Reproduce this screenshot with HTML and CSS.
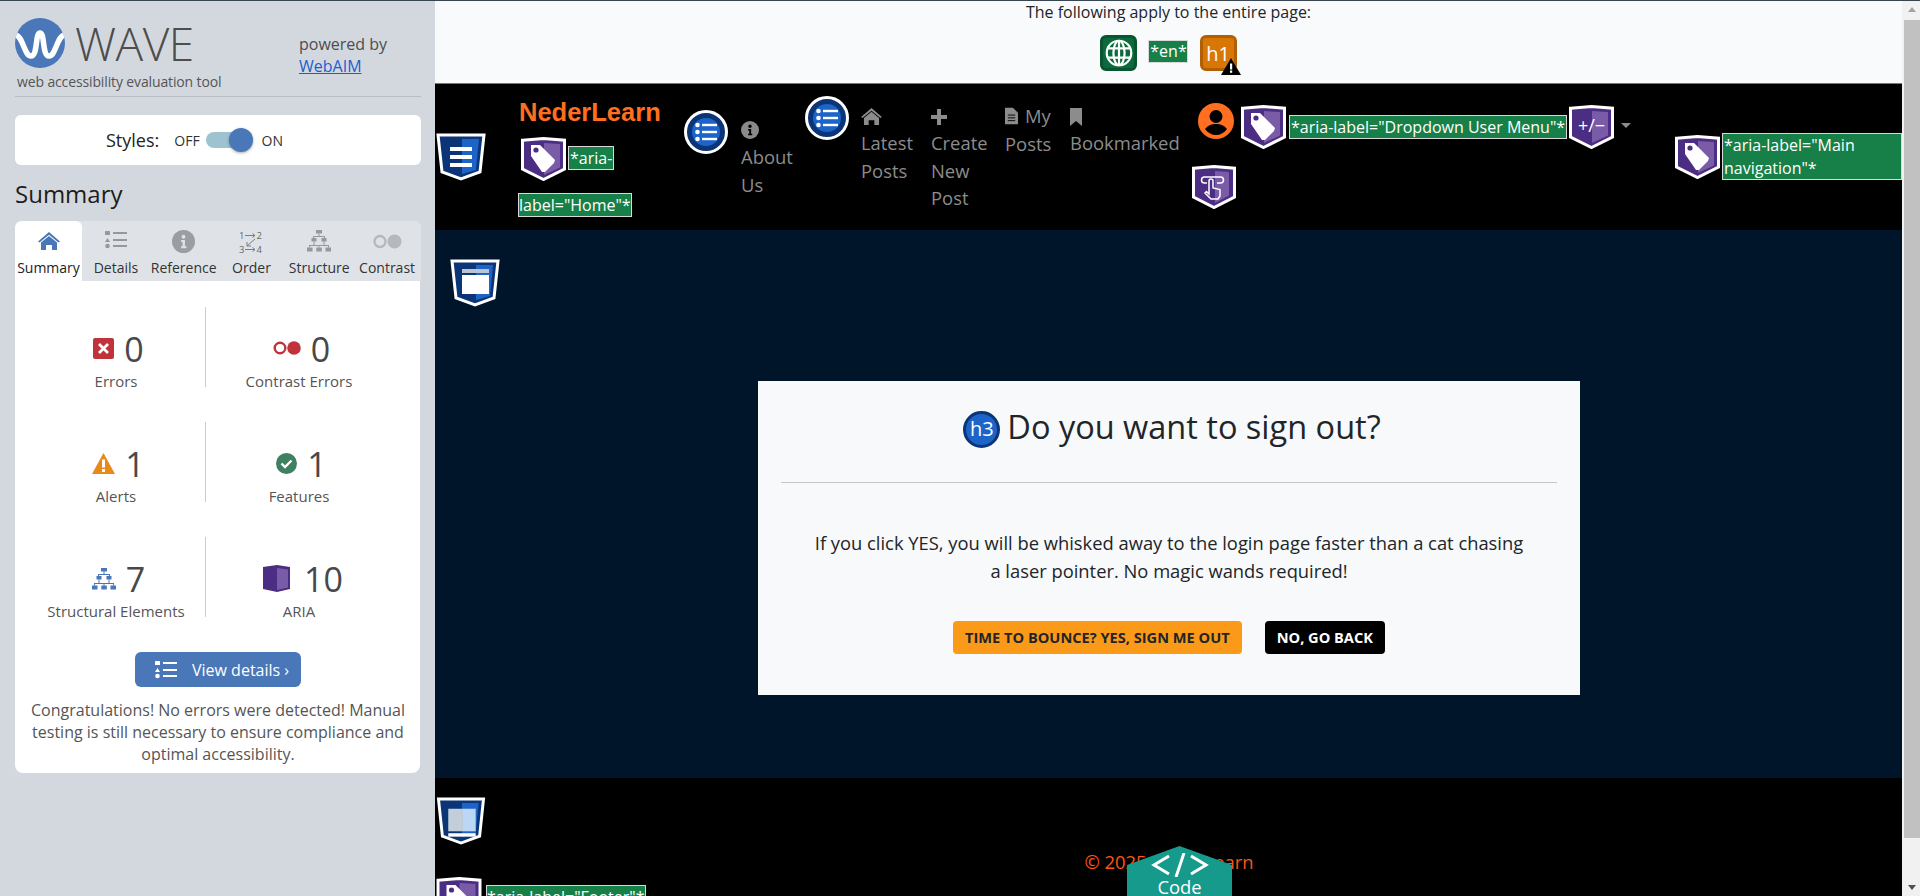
FILE: index.html
```html
<!DOCTYPE html>
<html lang="en">
<head>
<meta charset="utf-8">
<title>WAVE - NederLearn</title>
<link rel="stylesheet" href="styles.css">
</head>
<body>
<svg class="defs" width="0" height="0" aria-hidden="true">
  <defs>
    <symbol id="tag-shield" viewBox="0 0 45 44">
      <path d="M1.5 3.200 22.500 1.500 43.500 3.200V32L22.500 42.500 1.500 32Z" fill="#4b2d83" stroke="#fff" stroke-width="3"/>
      <path d="M23 6 39 7V30.500L23 38Z" fill="#7a5ba8"/>
      <path d="M10 8h9l15 15-1 3-9 9-3 0L10 19Z" fill="#fff"/>
      <circle cx="15" cy="13" r="2.600" fill="#4b2d83"/>
    </symbol>
    <symbol id="blue-circle" viewBox="0 0 44 44">
      <circle cx="22" cy="22" r="20.500" fill="#0c3578" stroke="#fff" stroke-width="3"/>
      <circle cx="22" cy="22" r="14" fill="#1d64c9"/>
      <g fill="#fff"><circle cx="13.500" cy="15" r="2.300"/><circle cx="13.500" cy="22" r="2.300"/><circle cx="13.500" cy="29" r="2.300"/><rect x="18" y="13.800" width="15" height="2.400"/><rect x="18" y="20.800" width="15" height="2.400"/><rect x="18" y="27.800" width="15" height="2.400"/></g>
    </symbol>
    <symbol id="list-lines" viewBox="0 0 22 18">
      <rect x="0" y="0" width="5" height="4" rx=".6"/><path d="M2.500 7 5 11H0Z"/><circle cx="2.500" cy="15" r="2.300"/>
      <rect x="8" y="1" width="14" height="2"/><rect x="8" y="8" width="14" height="2"/><rect x="8" y="14" width="14" height="2"/>
    </symbol>
    <symbol id="home" viewBox="0 0 22 18">
      <path d="M11 0 22 9.500 20.500 10.500 11 2.800 1.500 10.500 0 9.500Z"/><path d="M3 10.500 11 4l8 6.500V18h-5v-5H8v5H3Z"/>
    </symbol>
    <symbol id="structure" viewBox="0 0 24 22">
      <rect x="9" y="0" width="6" height="3.500"/><rect x="4.500" y="8" width="5" height="3.500"/><rect x="14.500" y="8" width="5" height="3.500"/>
      <rect x="0" y="17.500" width="5.500" height="4"/><rect x="9.300" y="17.500" width="5.500" height="4"/><rect x="18.500" y="17.500" width="5.500" height="4"/>
      <path d="M11.500 3.500h1V6h5.500v2h-1V7H7v1H6V6h5.500ZM2 15h20v2.500h-1V16h-8.500v1.500h-1V16H3v1.500H2ZM6.500 11.500h1V15h-1ZM16.500 11.500h1V15h-1Z"/>
    </symbol>
  </defs>
</svg>

<aside class="sidebar">
  <div class="brandbar">
    <div class="logo-col">
      <div class="logo-row">
        <svg class="logo" viewBox="0 0 50 50"><clipPath id="lc"><circle cx="25" cy="25" r="25"/></clipPath><circle cx="25" cy="25" r="25" fill="#4a77b8"/><path clip-path="url(#lc)" d="M0 17C8 17 9 38 16 38 23 38 20 15 25 15 30 15 27 38 34 38 41 38 42 17 50 17" fill="none" stroke="#fff" stroke-width="5.500"/></svg>
        <span class="wave">WAVE</span>
      </div>
      <div class="tagline">web accessibility evaluation tool</div>
    </div>
    <div class="powered">powered by<br><a href="#">WebAIM</a></div>
  </div>

  <div class="styles-card">
    <span class="styles-label">Styles:</span>
    <span class="offon">OFF</span>
    <span class="toggle"><span class="knob"></span></span>
    <span class="offon">ON</span>
  </div>

  <h2 class="sum-title">Summary</h2>

  <div class="tabs">
    <div class="tab active"><svg class="ti ti-home"><use href="#home"/></svg><span>Summary</span></div>
    <div class="tab"><svg class="ti ti-list"><use href="#list-lines"/></svg><span>Details</span></div>
    <div class="tab"><svg class="ti ti-info" viewBox="0 0 24 24"><circle cx="12" cy="12" r="12"/><circle cx="12" cy="7" r="2" fill="#dfe3e8"/><path d="M9.500 10.500h4V17h1.500v2H9.500v-2H11v-4.500H9.500Z" fill="#dfe3e8"/></svg><span>Reference</span></div>
    <div class="tab"><svg class="ti ti-order" viewBox="0 0 24 24"><text x="0" y="9" class="ord">1</text><text x="17.500" y="9" class="ord">2</text><text x="0" y="23" class="ord">3</text><text x="17.500" y="23" class="ord">4</text><path d="M6 5.500h10M13.500 3.500l2.500 2-2.500 2M6 19.500h10M13.500 17.500l2.500 2-2.500 2M16 9 8 16M8 12v4h4" fill="none" stroke="#7a7e84" stroke-width="1"/></svg><span>Order</span></div>
    <div class="tab"><svg class="ti ti-struct"><use href="#structure"/></svg><span>Structure</span></div>
    <div class="tab"><svg class="ti ti-contrast" viewBox="0 0 29 15"><circle cx="7" cy="7.500" r="5.500" fill="none" stroke="#b5b8bc" stroke-width="2.300"/><circle cx="21.500" cy="7.500" r="7" fill="#b5b8bc"/></svg><span>Contrast</span></div>
  </div>

  <div class="panel">
    <div class="stats">
      <div class="stat">
        <div class="stat-top"><svg class="si-err" viewBox="0 0 21 21"><rect width="21" height="21" rx="2" fill="#c1333a"/><path d="M6 6l9 9M15 6l-9 9" stroke="#fff" stroke-width="2.800"/></svg><span class="num">0</span></div>
        <div class="stat-label">Errors</div>
      </div>
      <div class="stat">
        <div class="stat-top"><svg class="si-con" viewBox="0 0 28 14"><circle cx="7" cy="7" r="5.300" fill="none" stroke="#c1333a" stroke-width="2.400"/><circle cx="21" cy="7" r="6.800" fill="#c1333a"/></svg><span class="num">0</span></div>
        <div class="stat-label">Contrast Errors</div>
      </div>
      <div class="stat">
        <div class="stat-top"><svg class="si-alert" viewBox="0 0 23 21"><path d="M11.500 0 23 21H0Z" fill="#e8891a"/><rect x="10" y="6.500" width="3" height="8" fill="#fff"/><rect x="10" y="16" width="3" height="3" fill="#fff"/></svg><span class="num">1</span></div>
        <div class="stat-label">Alerts</div>
      </div>
      <div class="stat">
        <div class="stat-top"><svg class="si-feat" viewBox="0 0 21 21"><circle cx="10.500" cy="10.500" r="10.500" fill="#3f8061"/><path d="M5.500 10.500l3.500 3.500 6.500-6.500" fill="none" stroke="#fff" stroke-width="2.400"/></svg><span class="num">1</span></div>
        <div class="stat-label">Features</div>
      </div>
      <div class="stat">
        <div class="stat-top"><svg class="si-struct"><use href="#structure"/></svg><span class="num">7</span></div>
        <div class="stat-label">Structural Elements</div>
      </div>
      <div class="stat">
        <div class="stat-top aria-top"><svg class="si-aria" viewBox="0 0 27 27"><path d="M0 2 14 0 27 2V24L14 27 0 24Z" fill="#4b2d83"/><path d="M14 3 25 4.500V22.500L14 25Z" fill="#7a5ba8"/></svg><span class="num">10</span></div>
        <div class="stat-label">ARIA</div>
      </div>
    </div>
    <button class="view-btn"><svg class="vb-icon"><use href="#list-lines"/></svg>View details ›</button>
    <p class="congrats">Congratulations! No errors were detected! Manual testing is still necessary to ensure compliance and optimal accessibility.</p>
  </div>
</aside>

<div class="page">
  <header class="wave-top">
    <div class="wt-text">The following apply to the entire page:</div>
    <div class="wt-icons">
      <span class="sq sq-green"><svg viewBox="0 0 24 24" class="globe"><g fill="none" stroke="#fff" stroke-width="1.900"><circle cx="12" cy="12" r="10.500"/><ellipse cx="12" cy="12" rx="4.800" ry="10.500"/><path d="M12 1.500v21M2.300 8h19.400M2.300 16h19.400"/></g></svg></span>
      <span class="badge en-badge">*en*</span>
      <span class="sq sq-orange">h1<svg class="warn" viewBox="0 0 20 17"><path d="M10 0 20 17H0Z" fill="#000"/><rect x="9" y="5.500" width="2.200" height="6" fill="#fff"/><rect x="9" y="12.500" width="2.200" height="2.300" fill="#fff"/></svg></span>
    </div>
  </header>

  <nav class="nav">
    <div class="c c-shield">
      <svg class="shield" viewBox="0 0 50 48"><path d="M2 2H48L44 39 25 46 6 39Z" fill="#0c3578" stroke="#fff" stroke-width="3"/><path d="M26 6H43L40 37 26 41Z" fill="#1d64c9"/><g fill="#fff"><rect x="14" y="14" width="22" height="4"/><rect x="14" y="22" width="22" height="4"/><rect x="14" y="30" width="22" height="4"/></g></svg>
    </div>
    <div class="c c-brand">
      <div class="brand">NederLearn</div>
      <div class="brand-label"><svg class="tag tag-home"><use href="#tag-shield"/></svg><span class="badge lb1">*aria-</span><br><span class="badge lb2">label="Home"*</span></div>
    </div>
    <div class="c c-list1"><svg class="circ"><use href="#blue-circle"/></svg></div>
    <div class="c c-about"><svg class="nav-ic info" viewBox="0 0 24 24"><circle cx="12" cy="12" r="12" fill="#8a8a8a"/><g fill="#000"><circle cx="12" cy="7" r="2.200"/><path d="M9.500 10.500h4V17h1.500v2H9.500v-2H11v-4.500H9.500Z"/></g></svg><a href="#">About<br>Us</a></div>
    <div class="c c-list2"><svg class="circ"><use href="#blue-circle"/></svg></div>
    <div class="c c-latest"><svg class="nav-ic homei"><use href="#home"/></svg><a href="#">Latest<br>Posts</a></div>
    <div class="c c-create"><svg class="nav-ic plus" viewBox="0 0 16 16"><path d="M6 0h4v6h6v4h-6v6H6v-6H0V6h6Z"/></svg><a href="#">Create<br>New<br>Post</a></div>
    <div class="c c-my"><a href="#"><svg class="nav-ic doc" viewBox="0 0 14 18"><path d="M0 0h8.500L14 5.500V18H0Z"/><path d="M3 8h8M3 11h8M3 14h8" stroke="#000" stroke-width="1"/></svg><span class="my-word">My</span><br>Posts</a></div>
    <div class="c c-book"><svg class="nav-ic bm" viewBox="0 0 12 18"><path d="M0 0h12v18L6 13 0 18Z"/></svg><a href="#">Bookmarked</a></div>
    <div class="c c-user">
      <div class="user-row">
        <svg class="avatar" viewBox="0 0 36 36"><circle cx="18" cy="18" r="18" fill="#ff6f1f"/><circle cx="18" cy="13.500" r="6.500" fill="#000"/><path d="M7 26c3-4 7-5 11-5s8 1 11 5c-3 4-7 6-11 6s-8-2-11-6Z" fill="#000"/></svg>
        <svg class="tag tag-user"><use href="#tag-shield"/></svg>
        <span class="badge lb3">*aria-label="Dropdown User Menu"*</span>
        <svg class="expand" viewBox="0 0 45 44"><path d="M1.500 3.200 22.500 1.500 43.500 3.200V32L22.500 42.500 1.500 32Z" fill="#4b2d83" stroke="#fff" stroke-width="3"/><path d="M23 6 39 7V30.500L23 38Z" fill="#7a5ba8"/><text x="22.500" y="27" class="pm">+/−</text></svg>
        <span class="caret"></span>
      </div>
      <svg class="hand" viewBox="0 0 44 44"><path d="M1.500 3.200 22 1.500 42.500 3.200V32L22 42.500 1.500 32Z" fill="#4b2d83" stroke="#fff" stroke-width="3"/><path d="M23 6 37 7V30.500L23 38Z" fill="#7a5ba8"/><path d="M15 18h-2.500a3 3 0 0 1 0-6h16a3 3 0 0 1 0 6H25M17 29v-13a2 2 0 0 1 4 0v7l7 1.500V31l-2 3h-7l-6-6 1.500-1.500Z" fill="none" stroke="#fff" stroke-width="1.500"/></svg>
    </div>
    <div class="c c-mainnav">
      <svg class="tag"><use href="#tag-shield"/></svg>
      <span class="badge lb4">*aria-label="Main navigation"*</span>
    </div>
  </nav>

  <main class="main">
    <svg class="shield shield-main" viewBox="0 0 50 48"><path d="M2 2H48L44 39 25 46 6 39Z" fill="#0c3578" stroke="#fff" stroke-width="3"/><path d="M26 6H43L40 37 26 41Z" fill="#1d64c9"/><rect x="12" y="10" width="27" height="4" fill="#b9c4d3"/><rect x="12" y="16" width="27" height="19" fill="#fff"/></svg>
    <section class="dialog">
      <h3 class="d-title"><span class="h3-ic">h3</span>Do you want to sign out?</h3>
      <hr class="d-rule">
      <p class="d-text">If you click YES, you will be whisked away to the login page faster than a cat chasing a laser pointer. No magic wands required!</p>
      <div class="d-btns">
        <button class="btn btn-yes">Time to Bounce? Yes, Sign Me Out</button>
        <button class="btn btn-no">No, Go Back</button>
      </div>
    </section>
  </main>

  <footer class="footer">
    <svg class="shield" viewBox="0 0 50 49"><path d="M2 2H48L44 40 25 47 6 40Z" fill="#0c3578" stroke="#fff" stroke-width="3"/><path d="M26 6H43L40 37 26 41Z" fill="#1d64c9"/><rect x="12" y="12" width="15" height="23" fill="#c3cedb"/><rect x="27" y="12" width="13" height="23" fill="#bcd6f5"/><rect x="12" y="37" width="28" height="3.500" fill="#fff"/></svg>
    <div class="copy">© 2025 NederLearn</div>
    <div class="foot-tag"><svg class="tag"><use href="#tag-shield"/></svg><span class="badge lb5">*aria-label="Footer"*</span></div>
    <div class="code-tab">
      <svg class="code-ic" viewBox="0 0 58 24"><path d="M18 3 3 12l15 9M40 3l15 9-15 9M33 0 25 24" fill="none" stroke="#fff" stroke-width="3"/></svg>
      <span>Code</span>
    </div>
  </footer>
</div>

<div class="scrollbar"><span class="sb-up"></span><span class="sb-thumb"></span><span class="sb-down"></span></div>
</body>
</html>
```

FILE: styles.css
```css
* { box-sizing: border-box; }
html, body { margin: 0; height: 896px; overflow: hidden; }
body {
  display: flex;
  font-family: "Open Sans", sans-serif;
  border-top: 1px solid #36454f;
  background: #000;
  color: #212529;
}
.defs { position: absolute; }

/* Sidebar */
.sidebar {
  flex: 0 0 435px;
  background: #d3d8df;
  padding: 0 14px 0 15px;
  height: 895px;
}
.brandbar {
  display: flex;
  height: 96px;
  border-bottom: 1px solid #b9bdc3;
  padding-top: 17px;
}
.logo-col { width: 284px; }
.logo-row { display: flex; align-items: center; height: 50px; }
.logo { width: 50px; height: 50px; flex: none; }
.wave {
  margin-left: 10px;
  font-size: 46px;
  font-weight: 300;
  line-height: 50px;
  color: #4d4d4d;
  font-family: "Open Sans", sans-serif;
  letter-spacing: -.5px;
}
.tagline { margin: 4px 0 0 2px; font-size: 14px; line-height: 19px; color: #555; letter-spacing: -.13px; white-space: nowrap; }
.powered { margin-top: 15px; font-size: 16px; line-height: 22px; color: #4d4d4d; }
.powered a { color: #1a5fd0; }

.styles-card {
  margin-top: 18px;
  height: 50px;
  width: 406px;
  background: #fff;
  border-radius: 6px;
  display: flex;
  align-items: center;
  padding-left: 91px;
}
.styles-label { font-size: 18px; margin-right: 15px; color: #222; }
.offon { font-size: 14px; color: #333; }
.toggle {
  position: relative;
  width: 45px;
  height: 16px;
  margin: 0 11px 0 6px;
  border-radius: 8px;
  background: #9ec3d0;
}
.knob {
  position: absolute;
  right: -2px;
  top: -4px;
  width: 24px;
  height: 24px;
  border-radius: 50%;
  background: #4a77b8;
  box-shadow: 0 1px 3px rgba(0,0,0,.35);
}
.sum-title { margin: 12px 0 11px; font-size: 24px; line-height: 33px; font-weight: 400; color: #1d1d1d; }

.tabs {
  display: flex;
  width: 406px;
  height: 60px;
  background: #dfe3e8;
  border-radius: 6px 6px 0 0;
  overflow: hidden;
}
.tab {
  flex: 1 1 0;
  display: flex;
  flex-direction: column;
  align-items: center;
  font-size: 14px;
  line-height: 18px;
  color: #333;
  padding-top: 9px;
  white-space: nowrap;
}
.tab span { position: absolute; margin-top: 29px; }
.tab.active { flex: 0 0 67px; background: #fff; border-radius: 6px 6px 0 0; color: #222; }
.ti { display: block; fill: #95999e; height: 24px; width: 24px; }
.ti-home { width: 22px; height: 18px; margin-top: 2px; fill: #4a77b8; }
.ti-list { width: 22px; height: 18px; margin-top: 1px; }
.ti-info { width: 23px; height: 23px; fill: #9a9ea3; }
.ti-order { overflow: visible; }
.ti-struct { width: 24px; height: 22px; }
.ti-contrast { width: 29px; height: 15px; margin-top: 4px; }
.ord { font-size: 9.5px; font-family: "Open Sans", sans-serif; fill: #666; }

.panel {
  width: 405px;
  height: 492px;
  background: #fff;
  border-radius: 0 0 8px 8px;
  padding-top: 26px;
}
.stats {
  display: grid;
  grid-template-columns: 191px 214px;
  row-gap: 35px;
}
.stat {
  height: 80px;
  padding-top: 20px;
  text-align: center;
}
.stat:nth-child(odd) { border-right: 1px solid #ccc; padding-left: 12px; }
.stat:nth-child(even) { padding-right: 28px; }
.stat-top { display: flex; align-items: center; justify-content: center; height: 44px; padding-left: 5px; }
.aria-top { gap: 4px; padding-left: 8px; }
.num { margin-left: 10px; font-size: 34px; line-height: 44px; color: #484848; }
.stat-label { font-size: 15px; line-height: 20px; color: #555; white-space: nowrap; }
.si-err, .si-feat { width: 21px; height: 21px; margin-top: -2px; }
.si-con { width: 28px; height: 14px; margin-top: -2px; }
.si-alert { width: 23px; height: 21px; margin-top: -1px; }
.si-struct { width: 24px; height: 22px; fill: #4a77b8; }
.si-aria { width: 27px; height: 27px; margin-top: -2px; }

.view-btn {
  display: flex;
  align-items: center;
  width: 166px;
  height: 35px;
  margin: 35px 0 0 120px;
  padding: 0 0 0 20px;
  border: 0;
  border-radius: 6px;
  background: #4a77b8;
  color: #fff;
  font: 16px "Open Sans", sans-serif;
}
.vb-icon { width: 22px; height: 18px; fill: #fff; margin-right: 15px; }
.congrats {
  margin: 12px 8px 0 9px;
  text-align: center;
  font-size: 16px;
  line-height: 22px;
  color: #555;
}

/* Page */
.page { flex: 0 0 1467px; height: 895px; overflow: hidden; position: relative; background: #000; }
.wave-top {
  height: 83px;
  background: #f9fafb;
  border-bottom: 1px solid #777;
  text-align: center;
}
.wt-text { font-size: 16px; line-height: 22px; color: #212529; }
.wt-icons { display: flex; justify-content: center; align-items: flex-start; margin-top: 12px; gap: 12px; }
.sq {
  position: relative;
  width: 37px;
  height: 36px;
  border-radius: 6px;
  display: flex;
  align-items: center;
  justify-content: center;
  font-size: 20px;
  color: #fff;
}
.sq-green { background: #0c6b3c; border: 3px solid #085630; }
.sq-orange { background: #d97706; border: 3px solid #b25f04; }
.globe { width: 28px; height: 28px; flex: none; }
.warn { position: absolute; right: -7px; bottom: -7px; width: 20px; height: 17px; }
.badge {
  background: #178048;
  color: #fff;
  border: 1px solid #d9d9d9;
  font-size: 16px;
  line-height: 22px;
}
.en-badge { height: 23px; margin: 5px 0 0 -1px; line-height: 20px; font-size: 16px; padding: 0 0 0 1px; }

.nav {
  height: 146px;
  background: #000;
  display: grid;
  grid-template-columns: 83px 166px 57px 64px 56px 70px 74px 65px 122px 483px 227px;
  color: #8c8c8c;
  font-size: 18.4px;
  line-height: 27.6px;
}
.nav a { color: inherit; text-decoration: none; }
.nav-ic { display: block; fill: #8c8c8c; }
.c-shield { padding: 49px 0 0 1px; }
.shield { display: block; width: 50px; height: 48px; }
.brand {
  font-family: "Liberation Sans", sans-serif;
  font-weight: 700;
  font-size: 25.5px;
  line-height: 30px;
  color: #ff6f1f;
  margin: 13px 0 0 1px;
  white-space: nowrap;
}
.brand-label { line-height: 46px; margin-top: 7px; white-space: nowrap; }
.tag { width: 45px; height: 44px; vertical-align: middle; }
.tag-home { margin-left: 3px; }
.lb1 { margin-left: 2px; padding: 0 1px; }
.lb2 { padding: 0; }
.circ { width: 44px; height: 44px; display: block; }
.c-list1 { padding-top: 26px; }
.c-about { padding-top: 37px; }
.info { width: 18px; height: 18px; margin-bottom: 4px; }
.c-list2 { padding-top: 12px; }
.c-latest { padding-top: 24px; }
.homei { width: 21px; height: 17px; margin-bottom: 4px; }
.c-create { padding-top: 25px; }
.plus { width: 16px; height: 16px; margin: 0 0 4px 0; }
.c-my { padding-top: 18px; }
.doc { display: inline-block; width: 13px; height: 18px; margin-right: 5px; vertical-align: -2px; }
.my-word { margin-left: 2px; }
.c-book { padding-top: 24px; }
.bm { width: 12px; height: 18px; margin-bottom: 3px; }
.c-user { position: relative; }
.user-row { display: flex; align-items: center; margin: 18px 0 0 6px; height: 44px; position: relative; top: 3px; }
.avatar { width: 36px; height: 36px; margin: -13px 7px 0 0; flex: none; }
.tag-user { flex: none; }
.lb3 { margin-left: 3px; height: 24px; line-height: 22px; white-space: nowrap; padding: 0 1px; margin-right: 2px; }
.expand { width: 45px; height: 44px; flex: none; }
.pm { font: 18px "Open Sans", sans-serif; fill: #fff; text-anchor: middle; }
.caret {
  width: 0;
  height: 0;
  margin-left: 7px;
  border: 5px solid transparent;
  border-top-color: #8c8c8c;
  border-bottom: 0;
  margin-bottom: 4px;
}
.hand { display: block; width: 44px; height: 44px; margin-top: 19px; }
.c-mainnav { display: flex; align-items: flex-start; padding-top: 51px; }
.c-mainnav .tag { flex: none; }
.lb4 { display: block; width: 180px; height: 47px; margin: -2px 0 0 2px; padding: 0 1px; line-height: 23px; }

.main { height: 548px; background: #00152a; padding: 29px 0 0 15px; }
.dialog {
  width: 822px;
  height: 314px;
  margin: 74px 0 0 308px;
  padding: 0 23px;
  background: #f8f9fa;
  text-align: center;
}
.d-title {
  margin: 0;
  padding: 24px 0 0 6px;
  height: 101px;
  font-size: 32.5px;
  line-height: 44px;
  font-weight: 400;
  display: flex;
  align-items: flex-start;
  justify-content: center;
  color: #212529;
}
.h3-ic {
  flex: none;
  width: 37px;
  height: 37px;
  margin: 6px 7px 0 0;
  border-radius: 50%;
  border: 3px solid #0c3578;
  background: #1d64c9;
  color: #fff;
  font-size: 20px;
  line-height: 30px;
}
.d-rule { margin: 0; border: 0; border-top: 1px solid #c4c6c9; }
.d-text {
  margin: 46px 32px 0;
  font-size: 18.35px;
  line-height: 28px;
  color: #212529;
}
.d-btns { display: flex; justify-content: center; gap: 23px; margin-top: 36px; }
.btn {
  height: 33px;
  border: 0;
  border-radius: 4px;
  padding: 0 12px 2px;
  font: 700 14.6px "Open Sans", sans-serif;
  text-transform: uppercase;
}
.btn-yes { background: #fb9a18; color: #212529; }
.btn-no { background: #000; color: #fff; }

.footer { height: 118px; background: #000; padding: 19px 0 0 1px; position: relative; }
.copy { margin-top: 3px; text-align: center; font-size: 18.4px; line-height: 27px; color: #ff5414; }
.foot-tag { display: flex; align-items: flex-start; margin-top: 2px; white-space: nowrap; }
.foot-tag .tag { width: 46px; flex: none; }
.lb5 { margin: 8px 0 0 4px; padding: 0; }
.code-tab {
  position: absolute;
  left: 692px;
  top: 68px;
  width: 105px;
  height: 50px;
  background: #159a8c;
  clip-path: polygon(0 19px, 50% 0, 100% 19px, 100% 100%, 0 100%);
  color: #fff;
  text-align: center;
  font-size: 18.4px;
  line-height: 20px;
}
.code-ic { display: block; width: 58px; height: 24px; margin: 7px auto 0; }
.code-tab span { display: block; }

/* Scrollbar */
.scrollbar {
  flex: 0 0 18px;
  height: 895px;
  padding-left: 2px;
  background: #f1f1f1;
  display: flex;
  flex-direction: column;
  align-items: center;
}
.sb-up, .sb-down { flex: none; width: 0; height: 0; border: 4px solid transparent; }
.sb-up { margin-top: 6px; border-bottom: 5px solid #a3a3a3; border-top: 0; }
.sb-thumb { margin-top: 8px; width: 16px; height: 818px; background: #c1c1c1; flex: none; }
.sb-down { margin-top: auto; margin-bottom: 6px; border-top: 5px solid #505050; border-bottom: 0; }
```
